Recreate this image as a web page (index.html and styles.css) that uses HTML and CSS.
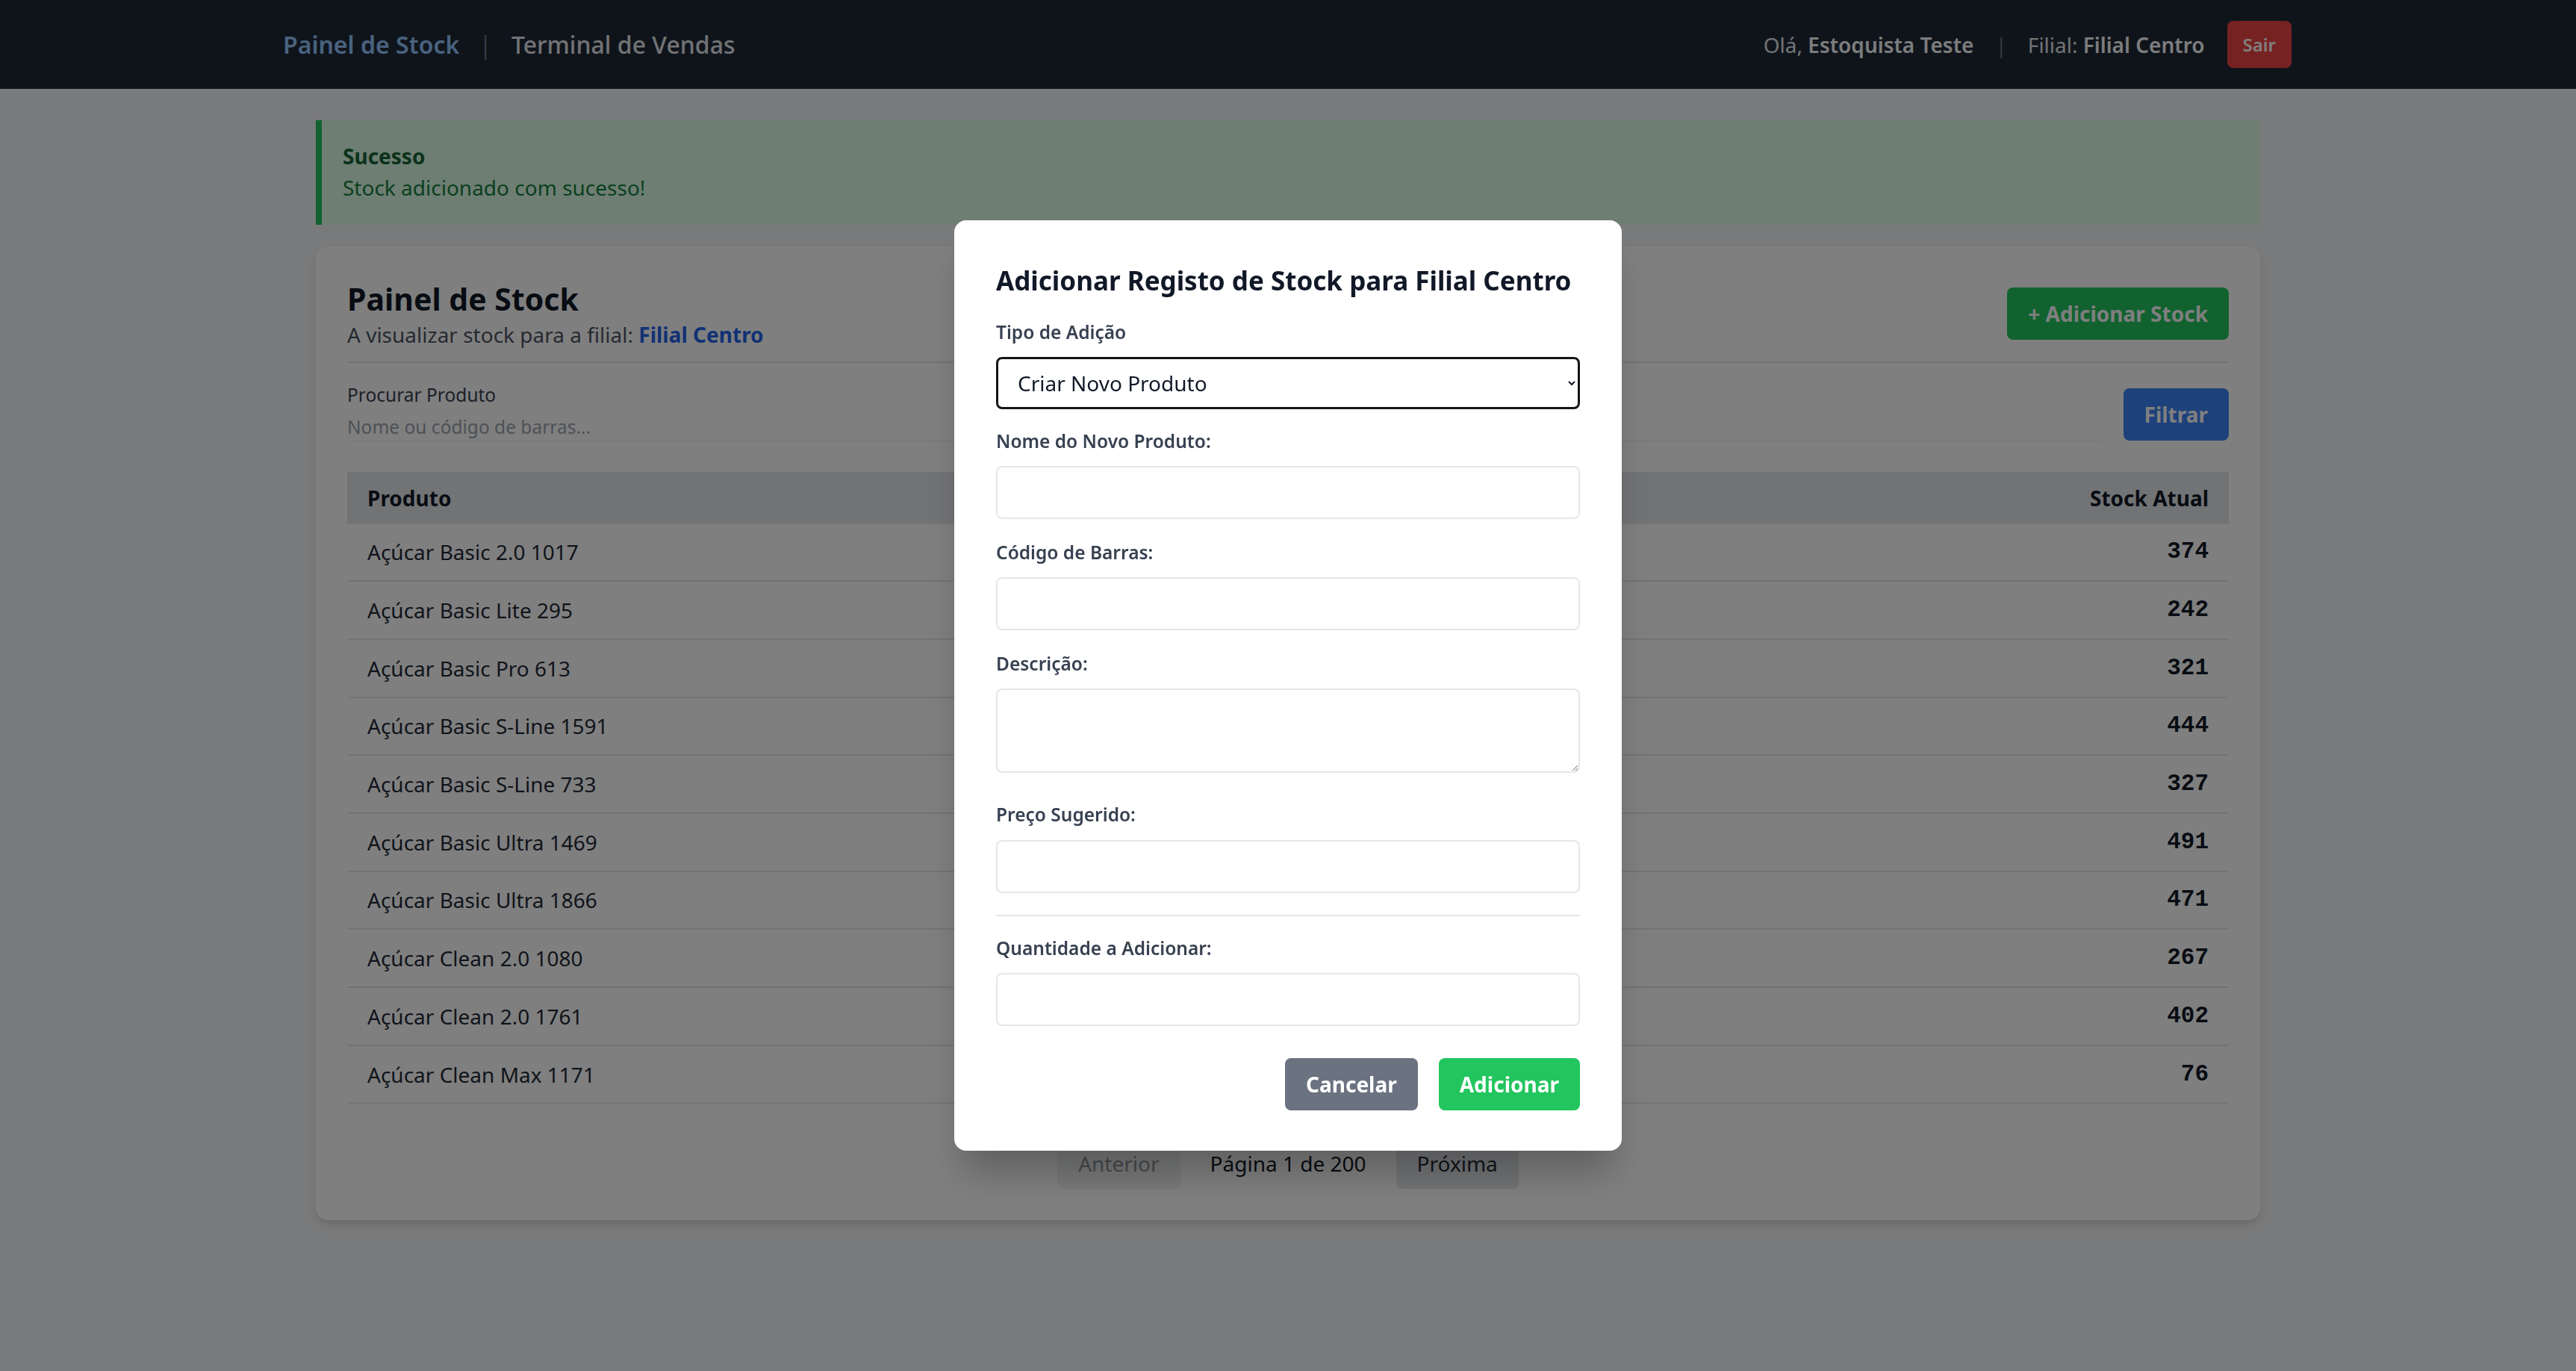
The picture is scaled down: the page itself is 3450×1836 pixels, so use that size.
FILE: index.html
```html
<!DOCTYPE html>
<html lang="pt">
<head>
<meta charset="utf-8">
<title>Painel de Stock</title>
<link rel="stylesheet" href="styles.css">
</head>
<body>
<nav class="nav">
  <div class="nav-left">
    <a class="nav-link active">Painel de Stock</a>
    <span class="nav-sep">|</span>
    <a class="nav-link">Terminal de Vendas</a>
  </div>
  <div class="nav-right">
    <span class="nav-text">Olá, <b>Estoquista Teste</b></span>
    <span class="nav-sep small">|</span>
    <span class="nav-text">Filial: <b>Filial Centro</b></span>
    <button class="btn-logout">Sair</button>
  </div>
</nav>

<main class="main">
  <div class="alert">
    <div class="alert-title">Sucesso</div>
    <div>Stock adicionado com sucesso!</div>
  </div>

  <section class="card">
    <div class="card-header">
      <div>
        <h1 class="card-title">Painel de Stock</h1>
        <p class="card-sub">A visualizar stock para a filial: <b>Filial Centro</b></p>
      </div>
      <button class="btn btn-green">+ Adicionar Stock</button>
    </div>

    <form class="search">
      <div class="search-field">
        <label class="search-label">Procurar Produto</label>
        <input class="search-input" type="text" placeholder="Nome ou código de barras...">
      </div>
      <button type="button" class="btn btn-blue">Filtrar</button>
    </form>

    <table class="table">
      <thead>
        <tr><th>Produto</th><th class="num">Stock Atual</th></tr>
      </thead>
      <tbody>
        <tr><td>Açúcar Basic 2.0 1017</td><td class="num">374</td></tr>
        <tr><td>Açúcar Basic Lite 295</td><td class="num">242</td></tr>
        <tr><td>Açúcar Basic Pro 613</td><td class="num">321</td></tr>
        <tr><td>Açúcar Basic S-Line 1591</td><td class="num">444</td></tr>
        <tr><td>Açúcar Basic S-Line 733</td><td class="num">327</td></tr>
        <tr><td>Açúcar Basic Ultra 1469</td><td class="num">491</td></tr>
        <tr><td>Açúcar Basic Ultra 1866</td><td class="num">471</td></tr>
        <tr><td>Açúcar Clean 2.0 1080</td><td class="num">267</td></tr>
        <tr><td>Açúcar Clean 2.0 1761</td><td class="num">402</td></tr>
        <tr><td>Açúcar Clean Max 1171</td><td class="num">76</td></tr>
      </tbody>
    </table>

    <div class="pager">
      <button class="pager-btn" disabled>Anterior</button>
      <span class="pager-info">Página 1 de 200</span>
      <button class="pager-btn">Próxima</button>
    </div>
  </section>
</main>

<div class="overlay">
  <div class="modal">
    <h2 class="modal-title">Adicionar Registo de Stock para Filial Centro</h2>

    <div class="field field-first">
      <label class="field-label">Tipo de Adição</label>
      <select class="field-select">
        <option>Criar Novo Produto</option>
        <option>Produto Existente</option>
      </select>
    </div>

    <div class="field">
      <label class="field-label">Nome do Novo Produto:</label>
      <input class="field-input" type="text">
    </div>

    <div class="field">
      <label class="field-label">Código de Barras:</label>
      <input class="field-input" type="text">
    </div>

    <div class="field field-tall">
      <label class="field-label">Descrição:</label>
      <textarea class="field-input field-textarea"></textarea>
    </div>

    <div class="field field-last">
      <label class="field-label">Preço Sugerido:</label>
      <input class="field-input" type="text">
    </div>

    <div class="divider"></div>

    <div class="field field-last">
      <label class="field-label">Quantidade a Adicionar:</label>
      <input class="field-input" type="text">
    </div>

    <div class="modal-actions">
      <button class="btn btn-gray">Cancelar</button>
      <button class="btn btn-green">Adicionar</button>
    </div>
  </div>
</div>
</body>
</html>
```

FILE: styles.css
```css
* {
  box-sizing: border-box;
}

html,
body {
  margin: 0;
}

body {
  background: #f3f4f6;
  font-family: "Noto Sans", "Open Sans", sans-serif;
  color: #111827;
  min-height: 1836px;
}

/* ---------- navbar ---------- */
.nav {
  height: 119px;
  background: #1f2937;
  display: flex;
  align-items: center;
  justify-content: space-between;
  padding: 0 381px 0 379px;
}

.nav-left,
.nav-right {
  display: flex;
  align-items: center;
}

.nav-link {
  font-size: 32px;
  font-weight: 500;
  color: #e5e7eb;
}

.nav-link.active {
  font-weight: 600;
  color: #93c5fd;
}

.nav-sep {
  color: #6b7280;
  font-size: 32px;
  margin: 0 26px 0 26px;
}

.nav-sep.small {
  font-size: 28px;
  margin: 0 28px 0 29px;
}

.nav-text {
  font-size: 28px;
  color: #e5e7eb;
}

.nav-text b {
  font-weight: 600;
  color: #f9fafb;
}

.btn-logout {
  margin-left: 30px;
  height: 63px;
  padding: 0 21px;
  border: 0;
  border-radius: 8px;
  background: #ef4444;
  color: #fff;
  font-family: inherit;
  font-size: 24px;
  font-weight: 600;
}

/* ---------- main ---------- */
.main {
  width: 2604px;
  margin: 0 auto;
  padding-top: 42px;
}

.alert {
  background: #dcfce7;
  border-left: 8px solid #22c55e;
  padding: 27px 32px 29px 28px;
  font-size: 28px;
  line-height: 42px;
  color: #15803d;
  margin-bottom: 29px;
}

.alert-title {
  font-weight: 700;
  color: #166534;
}

.card {
  background: #fff;
  border-radius: 16px;
  padding: 42px;
  box-shadow: 0 8px 14px -2px rgba(0, 0, 0, 0.1), 0 4px 8px -4px rgba(0, 0, 0, 0.1);
}

.card-header {
  display: flex;
  justify-content: space-between;
  align-items: center;
  padding-bottom: 16px;
  border-bottom: 2px solid #e5e7eb;
}

.card-title {
  margin: 0;
  font-size: 41px;
  line-height: 56px;
  font-weight: 700;
  color: #111827;
}

.card-sub {
  margin: 0;
  font-size: 28px;
  line-height: 40px;
  color: #4b5563;
}

.card-sub b {
  color: #2563eb;
  font-weight: 700;
}

.btn {
  height: 70px;
  padding: 0 28px;
  border: 0;
  border-radius: 8px;
  font-family: inherit;
  font-size: 28px;
  font-weight: 700;
  color: #fff;
}

.btn-green {
  background: #22c55e;
}

.btn-blue {
  background: #3b82f6;
}

.btn-gray {
  background: #6b7280;
}

/* ---------- search ---------- */
.search {
  display: flex;
  align-items: flex-end;
  gap: 29px;
  margin-top: 25.5px;
}

.search-field {
  flex: 1;
}

.search-label {
  display: block;
  font-size: 24.5px;
  line-height: 34px;
  color: #374151;
}

.search-input {
  display: block;
  width: 100%;
  height: 44px;
  padding: 7px 0 0 0;
  border: 0;
  border-radius: 8px;
  background: transparent;
  box-shadow: 0 2px 2px rgba(0, 0, 0, 0.06);
  font-family: inherit;
  font-size: 24.5px;
  color: #111827;
  outline: none;
}

.search-input::placeholder {
  color: #9ca3af;
}

/* ---------- table ---------- */
.table {
  width: 100%;
  margin-top: 42px;
  border-collapse: collapse;
  font-size: 28px;
}

.table th {
  height: 70px;
  padding: 0 27px;
  background: #e5e7eb;
  text-align: left;
  font-weight: 700;
  line-height: 40px;
  color: #111827;
}

.table td {
  padding: 17.85px 27px;
  line-height: 40px;
  border-bottom: 2px solid #e5e7eb;
  color: #1f2937;
}

.table .num {
  text-align: right;
}

.table td.num {
  font-family: "Liberation Mono", monospace;
  font-weight: 700;
  font-size: 31px;
  color: #111827;
}

/* ---------- pagination ---------- */
.pager {
  display: flex;
  justify-content: center;
  align-items: center;
  margin-top: 46px;
}

.pager-btn {
  padding: 14px 28px;
  border: 0;
  border-radius: 8px;
  background: #e5e7eb;
  color: #1f2937;
  font-family: inherit;
  font-size: 28px;
  line-height: 40px;
}

.pager-btn:disabled {
  opacity: 0.5;
}

.pager-info {
  margin: 0 40px;
  font-size: 28px;
  line-height: 40px;
  color: #111827;
}

/* ---------- modal ---------- */
.overlay {
  position: fixed;
  inset: 0;
  background: rgba(0, 0, 0, 0.5);
  display: flex;
  align-items: center;
  justify-content: center;
}

.modal {
  width: 894px;
  padding: 56px 56px 54px;
  background: #fff;
  border-radius: 16px;
  box-shadow: 0 40px 50px -12px rgba(0, 0, 0, 0.25);
}

.modal-title {
  margin: 0 0 27px;
  font-size: 35px;
  line-height: 50px;
  font-weight: 700;
  color: #111827;
  white-space: nowrap;
}

.field {
  margin-bottom: 27.5px;
}

.field-first {
  margin-bottom: 25.5px;
}

.field-tall {
  margin-bottom: 39px;
}

.field-last {
  margin-bottom: 0;
}

.field-label {
  display: block;
  margin-bottom: 16.5px;
  font-size: 24.5px;
  line-height: 34px;
  font-weight: 600;
  color: #374151;
}

.field-select {
  display: block;
  width: 100%;
  height: 70px;
  padding: 0 22px;
  border: 3px solid #161616;
  border-radius: 8px;
  background: #fff;
  font-family: inherit;
  font-size: 28px;
  color: #111827;
}

.field-input {
  display: block;
  width: 100%;
  height: 71px;
  padding: 0 24px;
  border: 2px solid #e5e7eb;
  border-radius: 8px;
  background: #fff;
  font-family: inherit;
  font-size: 28px;
  color: #111827;
}

.field-textarea {
  height: 113px;
  padding: 16px 24px;
}

.divider {
  height: 2px;
  background: #e5e7eb;
  margin: 29px 0 26px;
}

.modal-actions {
  display: flex;
  justify-content: flex-end;
  gap: 28px;
  margin-top: 43px;
}
```
